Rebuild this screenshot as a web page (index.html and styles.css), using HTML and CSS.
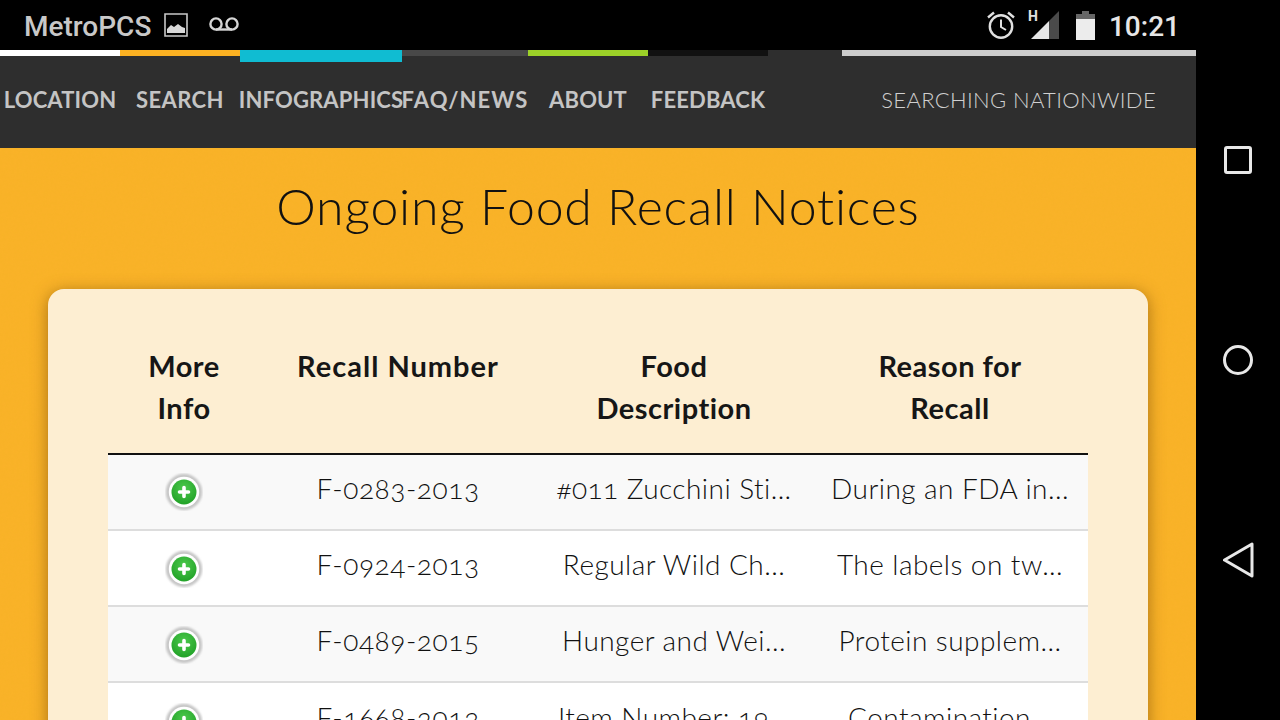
FILE: index.html
```html
<!DOCTYPE html>
<html lang="en">
<head>
<meta charset="utf-8">
<title>Ongoing Food Recall Notices</title>
<link rel="stylesheet" href="styles.css">
</head>
<body>
<svg class="defs" width="0" height="0" aria-hidden="true">
  <defs>
    <radialGradient id="disc" cx="50%" cy="35%" r="70%">
      <stop offset="0" stop-color="#4cc94c"/>
      <stop offset="1" stop-color="#1f9f25"/>
    </radialGradient>
    <filter id="soft" x="-20%" y="-20%" width="140%" height="140%"><feGaussianBlur stdDeviation="0.9"/></filter>
    <filter id="soft2" x="-20%" y="-20%" width="140%" height="140%"><feGaussianBlur stdDeviation="0.5"/></filter>
    <symbol id="plus" viewBox="0 0 38 38">
      <circle cx="19" cy="19" r="18.2" fill="#c6c6c6" filter="url(#soft)"/>
      <circle cx="19" cy="19" r="15.2" fill="#fff" filter="url(#soft2)"/>
      <circle cx="19" cy="19" r="12.5" fill="url(#disc)" filter="url(#soft2)"/>
      <path d="M19 14.5v9M14.5 19h9" stroke="#fff" stroke-width="3.6" stroke-linecap="round"/>
    </symbol>
  </defs>
</svg>
<div class="screen">
  <header class="status">
    <div class="status-left">
      <span class="carrier">MetroPCS</span>
      <svg class="ico-image" viewBox="0 0 24 24"><path d="M1 1h22v22H1z" fill="none" stroke="#c8c8c8" stroke-width="1.6"/><path d="M3 20v-4l4-4 3 2 4-3 4 3 3 1v5z" fill="#d8d8d8"/></svg>
      <svg class="ico-vm" viewBox="0 0 30 14"><path d="M7 12.5h16" stroke="#d6d6d6" stroke-width="2.4"/><circle cx="7" cy="7" r="5.6" fill="none" stroke="#d6d6d6" stroke-width="2.4"/><circle cx="23" cy="7" r="5.6" fill="none" stroke="#d6d6d6" stroke-width="2.4"/></svg>
    </div>
    <div class="status-right">
      <svg class="ico-alarm" viewBox="0 0 28 28"><circle cx="14" cy="15.5" r="11.2" fill="none" stroke="#e0e0e0" stroke-width="2.4"/><path d="M14 8.5v7.5l5 3" fill="none" stroke="#e0e0e0" stroke-width="2"/><path d="M1 6.5 7 1.5M27 6.5 21 1.5" stroke="#e0e0e0" stroke-width="2.4"/></svg>
      <div class="signal">
        <span class="net">H</span>
        <svg class="ico-signal" viewBox="0 0 28 28"><path d="M28 0v28H18V10z" fill="#4a4a4a"/><path d="M0 28 18 10v18z" fill="#e6e6e6"/></svg>
      </div>
      <svg class="ico-battery" viewBox="0 0 19 29"><path d="M6 0h7v3h6v6H0V3h6z" fill="#666"/><path d="M0 8h19v21H0z" fill="#ececec"/></svg>
      <span class="clock">10:21</span>
    </div>
  </header>
  <nav class="nav">
    <div class="nav-item white"><span class="nav-label">LOCATION</span></div>
    <div class="nav-item orange"><span class="nav-label spaced">SEARCH</span></div>
    <div class="nav-item cyan wide"><span class="nav-label">INFOGRAPHICS</span></div>
    <div class="nav-item grey mid"><span class="nav-label">FAQ/NEWS</span></div>
    <div class="nav-item green"><span class="nav-label">ABOUT</span></div>
    <div class="nav-item black"><span class="nav-label">FEEDBACK</span></div>
    <div class="nav-gap"></div>
    <div class="nav-search"><span class="nav-search-label">SEARCHING NATIONWIDE</span></div>
  </nav>
  <main class="page">
    <h1 class="title">Ongoing Food Recall Notices</h1>
    <section class="card">
      <table class="recalls">
        <thead>
          <tr><th>More<br>Info</th><th class="top">Recall Number</th><th>Food<br>Description</th><th>Reason for<br>Recall</th></tr>
        </thead>
        <tbody>
          <tr><td><svg class="add"><use href="#plus"/></svg></td><td>F-0283-2013</td><td>#011 Zucchini Sti...</td><td>During an FDA in...</td></tr>
          <tr><td><svg class="add"><use href="#plus"/></svg></td><td>F-0924-2013</td><td>Regular Wild Ch...</td><td>The labels on tw...</td></tr>
          <tr><td><svg class="add"><use href="#plus"/></svg></td><td>F-0489-2015</td><td>Hunger and Wei...</td><td>Protein supplem...</td></tr>
          <tr><td><svg class="add"><use href="#plus"/></svg></td><td>F-1668-2013</td><td>Item Number: 19...</td><td>Contamination...</td></tr>
        </tbody>
      </table>
    </section>
  </main>
</div>
<aside class="softkeys">
  <svg class="key-square" viewBox="0 0 28 28"><rect x="1.5" y="1.5" width="25" height="25" rx="1.5" fill="none" stroke="#e8e8e8" stroke-width="3"/></svg>
  <svg class="key-circle" viewBox="0 0 30 30"><circle cx="15" cy="15" r="13.5" fill="none" stroke="#e8e8e8" stroke-width="3"/></svg>
  <svg class="key-back" viewBox="0 0 32 36"><path d="M2.5 18 30 2v32z" fill="none" stroke="#e8e8e8" stroke-width="3" stroke-linejoin="round"/></svg>
</aside>
</body>
</html>
```
FILE: styles.css
```css
* { box-sizing: border-box; }
html, body { margin: 0; height: 720px; overflow: hidden; background: #000; }
body { display: flex; font-family: Lato, "Open Sans", sans-serif; }
.defs { position: absolute; }

.screen { width: 1196px; height: 720px; display: flex; flex-direction: column; overflow: hidden; }

.status { height: 50px; flex: none; background: #000; display: flex; justify-content: space-between; align-items: center; padding: 2px 16px 0 24px; font-family: Roboto, sans-serif; }
.status-left, .status-right { display: flex; align-items: center; }
.carrier { font-size: 28px; font-weight: 500; color: #c8c8c8; }
.ico-image { width: 24px; height: 24px; margin-left: 13px; margin-top: -2px; }
.ico-vm { width: 30px; height: 14px; margin-left: 21px; margin-top: -4px; }
.ico-alarm { width: 28px; height: 28px; margin-top: -2px; }
.signal { position: relative; width: 28px; height: 28px; margin-left: 16px; margin-top: -2px; }
.ico-signal { width: 28px; height: 28px; display: block; }
.net { position: absolute; left: -3px; top: -2px; font-size: 14px; font-weight: 700; color: #e0e0e0; line-height: 15px; }
.ico-battery { width: 19px; height: 29px; margin-left: 17px; margin-top: -2px; }
.clock { font-size: 28px; font-weight: 500; color: #e6e6e6; margin-left: 14px; }

.nav { height: 98px; flex: none; display: flex; background: #2e2e2e; }
.nav-item { width: 120px; height: 98px; display: flex; align-items: center; justify-content: center; border-top: 6px solid transparent; padding-bottom: 5px; white-space: nowrap; }
.nav-label { font-size: 22px; font-weight: 700; color: #c4c4c4; letter-spacing: .15px; }
.spaced { letter-spacing: .4px; }
.wide { width: 162px; border-top-width: 12px; padding-bottom: 11px; }
.mid { width: 126px; }
.mid .nav-label { letter-spacing: 1.1px; }
.white { border-top-color: #fff; }
.orange { border-top-color: #fbb122; }
.cyan { border-top-color: #10bcd2; }
.grey { border-top-color: #484848; }
.green { border-top-color: #9cd128; }
.black { border-top-color: #111; }
.nav-gap { width: 74px; }
.nav-search { flex: 1; border-top: 6px solid #ccc; display: flex; align-items: center; justify-content: flex-end; padding: 0 40px 6px 0; }
.nav-search-label { font-size: 22px; font-weight: 300; color: #d0d0d0; white-space: nowrap; letter-spacing: .35px; }

.page { flex: 1; background-color: #fab229; background-image: url("data:image/svg+xml,%3Csvg xmlns='http://www.w3.org/2000/svg' width='300' height='300'%3E%3Cfilter id='n'%3E%3CfeTurbulence type='fractalNoise' baseFrequency='.35' numOctaves='2' stitchTiles='stitch'/%3E%3CfeColorMatrix values='0 0 0 0 .7 0 0 0 0 .45 0 0 0 0 0 0 0 0 .07 0'/%3E%3C/filter%3E%3Crect width='300' height='300' filter='url(%23n)'/%3E%3C/svg%3E"); padding: 0 48px; }
.title { margin: 0; height: 141px; padding-top: 26px; text-align: center; font-size: 50px; line-height: 64px; font-weight: 300; letter-spacing: .8px; color: #111; }
.card { height: 600px; background: #fdeed2; border-radius: 16px; padding: 56px 60px; box-shadow: 0 3px 16px rgba(90, 50, 0, .5); }

.recalls { width: 980px; table-layout: fixed; border-collapse: collapse; color: #111; font-size: 28px; font-variant-numeric: oldstyle-nums; }
.recalls th:nth-child(1) { width: 152px; }
.recalls th { height: 108px; padding: 0 0 24px; font-size: 29px; letter-spacing: .5px; font-weight: 700; line-height: 42px; text-align: center; color: #161616; vertical-align: top; border-bottom: 2px solid #111; }
.recalls th.top { letter-spacing: 1px; }
.recalls td { height: 76px; padding: 0 0 8px; text-align: center; font-weight: 300; line-height: 42px; border-top: 2px solid #ddd; background: #fff; white-space: nowrap; overflow: hidden; }
.recalls td:nth-child(2) { letter-spacing: .55px; }
.recalls td:nth-child(n+3) { letter-spacing: .45px; }
.recalls tbody tr:first-child td { border-top: 0; }
.recalls tbody tr:nth-child(odd) td { background: #f9f9f9; }
.add { width: 38px; height: 38px; display: block; margin: 10px auto 0; }
.recalls tbody tr:first-child .add { margin-top: 8px; }

.softkeys { flex: 1; height: 720px; background: #000; position: relative; }
.key-square { position: absolute; left: 28px; top: 146px; width: 28px; height: 28px; }
.key-circle { position: absolute; left: 27px; top: 345px; width: 30px; height: 30px; }
.key-back { position: absolute; left: 26px; top: 542px; width: 32px; height: 36px; }
```
